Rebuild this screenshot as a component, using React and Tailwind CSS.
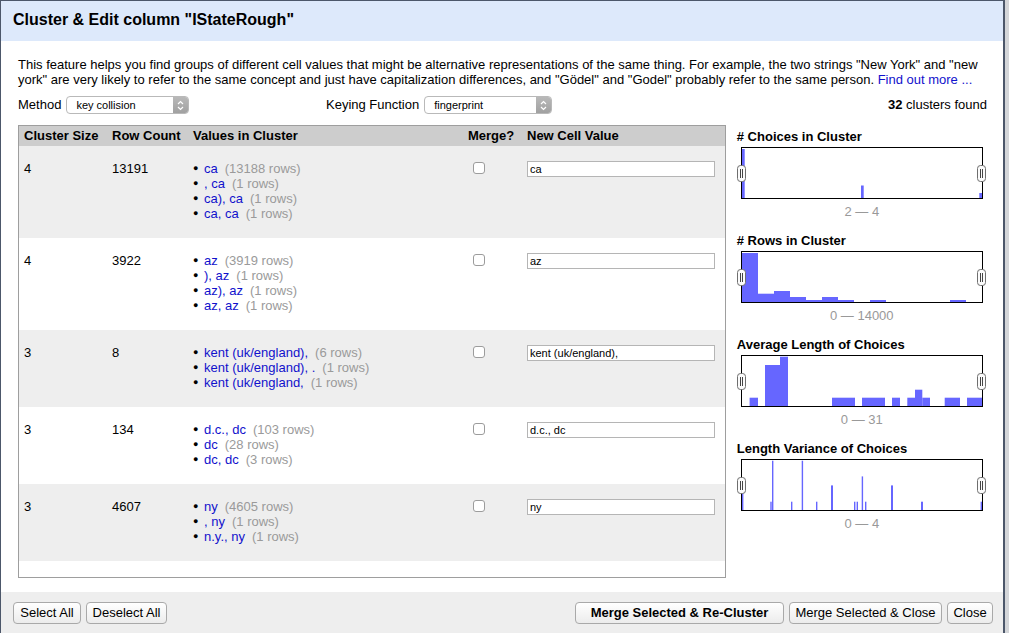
import React from "react";

const rows = [
  { size: 4, count: 13191, vals: [["ca", "13188"], [", ca", "1"], ["ca), ca", "1"], ["ca, ca", "1"]], nv: "ca", gray: true },
  { size: 4, count: 3922, vals: [["az", "3919"], ["), az", "1"], ["az), az", "1"], ["az, az", "1"]], nv: "az", gray: false },
  { size: 3, count: 8, vals: [["kent (uk/england),", "6"], ["kent (uk/england), .", "1"], ["kent (uk/england,", "1"]], nv: "kent (uk/england),", gray: true },
  { size: 3, count: 134, vals: [["d.c., dc", "103"], ["dc", "28"], ["dc, dc", "3"]], nv: "d.c., dc", gray: false },
  { size: 3, count: 4607, vals: [["ny", "4605"], [", ny", "1"], ["n.y., ny", "1"]], nv: "ny", gray: true },
];

const hists = [
  {
    title: "# Choices in Cluster",
    label: "2 \u2014 4",
    bars: [[0, 2.7, 1], [119, 2.7, 37.5], [237.3, 2.7, 45]],
  },
  {
    title: "# Rows in Cluster",
    label: "0 \u2014 14000",
    bars: [[0, 16, 1], [16, 16, 41.7], [32, 16, 39], [48, 16, 45], [64, 16, 48], [80, 16, 45], [96, 16, 48], [128, 16, 48], [208, 16, 48]],
  },
  {
    title: "Average Length of Choices",
    label: "0 \u2014 31",
    bars: [[7.6, 8.4, 41.7], [23, 15, 9], [38, 8, 0.7], [90, 23, 41.7], [120, 23, 41.7], [150, 8, 41.7], [165.3, 7.7, 41.7], [173, 7.3, 33.7], [180.3, 7.7, 41.7], [202.7, 15.3, 41.7], [225, 15, 41.7]],
  },
  {
    title: "Length Variance of Choices",
    label: "0 \u2014 4",
    bars: [[0, 1.4, 33.4], [28.3, 1.4, 41.7], [30, 1.4, 0.7], [49, 1.4, 41.7], [59.7, 1.4, 0.7], [74, 1.4, 41.7], [89, 2, 25.4], [112, 1.4, 41.7], [114.6, 1.4, 41.7], [119.7, 1.4, 16.4], [123, 1.4, 41.7], [149, 2, 25.4], [179, 2, 41.7], [238.6, 1.4, 41.7]],
  },
];

function Handle({ side }) {
  return (
    <svg
      width="9"
      height="17"
      viewBox="0 0 9 17"
      className={side === "l" ? "absolute left-[-5px] top-[17px]" : "absolute right-[-4px] top-[17px]"}
    >
      <rect x="0.5" y="0.5" width="8" height="16" rx="3" fill="#fbfbfb" stroke="#6e6e6e" />
      <line x1="3.5" y1="4" x2="3.5" y2="13" stroke="#444" strokeWidth="1" />
      <line x1="5.5" y1="4" x2="5.5" y2="13" stroke="#444" strokeWidth="1" />
    </svg>
  );
}

function Histogram({ h }) {
  return (
    <div className="mb-[14px]">
      <div className="text-[13px] leading-[15px] font-bold text-black">{h.title}</div>
      <div className="relative mt-[3px] ml-[4px] w-[242px] h-[52px] border border-black bg-white">
        <svg width="240" height="50" viewBox="0 0 240 50" className="block">
          {h.bars.map(([x, w, y], i) => (
            <rect key={i} x={x} y={y} width={w} height={50 - y} fill="#6666ff" />
          ))}
        </svg>
        <Handle side="l" />
        <Handle side="r" />
      </div>
      <div className="ml-[4px] w-[242px] mt-[5px] text-center text-[13px] leading-[15px] text-[#999]">{h.label}</div>
    </div>
  );
}

function Select({ value, w }) {
  return (
    <div className={`flex items-center h-[18px] rounded-[4px] border border-[#b9b9b9] bg-white overflow-hidden ${w}`}>
      <span className="flex-1 pl-[9px] text-[11px] leading-[16px] text-black">{value}</span>
      <span className="w-[15px] h-full bg-gradient-to-b from-[#b9b9b9] to-[#a1a1a1] flex items-center justify-center">
        <svg width="7" height="11" viewBox="0 0 7 11">
          <path d="M1 4 L3.5 1.5 L6 4" fill="none" stroke="#fff" strokeWidth="1.2" />
          <path d="M1 7 L3.5 9.5 L6 7" fill="none" stroke="#fff" strokeWidth="1.2" />
        </svg>
      </span>
    </div>
  );
}

function Btn({ children, w, bold }) {
  return (
    <button
      className={`h-[22px] ${w} rounded-[4px] border border-[#a9a9a9] bg-gradient-to-b from-white to-[#ececec] text-[13px] leading-[20px] text-black ${bold ? "font-bold" : ""}`}
    >
      {children}
    </button>
  );
}

export default function App() {
  return (
    <div className="flex w-[1009px] h-[633px] overflow-hidden bg-[#d4d6d9]" style={{ fontFamily: '"Liberation Sans", Arial, sans-serif' }}>
      <div className="flex flex-col w-[1005px] h-[633px] bg-white border-t border-l border-r-2 border-[#4c576a]">
        {/* Header */}
        <div className="h-[40px] bg-[#dde9fb] flex items-center px-[12px] pb-[3px]">
          <h1 className="text-[16px] font-bold text-black">Cluster &amp; Edit column "IStateRough"</h1>
        </div>

        {/* Body */}
        <div className="flex-1 flex flex-col pl-[17px] pr-[15px] pt-[16px]">
          <p className="text-[13px] leading-[15px] text-black">
            This feature helps you find groups of different cell values that might be alternative representations of the same thing. For example, the two strings "New York" and "new york" are very likely to refer to the same concept and just have capitalization differences, and "Gödel" and "Godel" probably refer to the same person. <span className="text-[#1111cc]">Find out more ...</span>
          </p>

          <div className="mt-[9px] h-[18px] flex items-center text-[13px] text-black">
            <div className="w-[308px] flex items-center gap-[5px]">
              <span>Method</span>
              <Select value="key collision" w="w-[123px]" />
            </div>
            <div className="flex items-center gap-[5px]">
              <span>Keying Function</span>
              <Select value="fingerprint" w="w-[128px]" />
            </div>
            <div className="flex-1 text-right pr-[1px]">
              <b>32</b> clusters found
            </div>
          </div>

          <div className="mt-[11px] flex">
            {/* Table */}
            <div className="w-[710px] h-[453px] border border-[#9e9e9e] overflow-hidden bg-white">
              <div className="grid grid-cols-[93px_81px_275px_59px_1fr] h-[20px] items-center bg-[#cdcdcd] text-[13px] font-bold text-black">
                <div className="pl-[5px]">Cluster Size</div>
                <div>Row Count</div>
                <div>Values in Cluster</div>
                <div>Merge?</div>
                <div>New Cell Value</div>
              </div>
              {rows.map((r, i) => (
                <div
                  key={i}
                  className={`grid grid-cols-[93px_81px_275px_59px_1fr] pt-[15px] pb-[17px] text-[13px] leading-[15px] text-black ${r.gray ? "bg-[#eeeeee]" : "bg-white"}`}
                >
                  <div className="pl-[5px]">{r.size}</div>
                  <div>{r.count}</div>
                  <div>
                    {r.vals.map(([v, c], j) => (
                      <div key={j} className="flex h-[15px]">
                        <span className="w-[11px] text-[9px] leading-[15px]">●</span>
                        <span className="text-[#1111cc]">{v}</span>
                        <span className="ml-[7px] text-[#9a9a9a]">({c} rows)</span>
                      </div>
                    ))}
                  </div>
                  <div className="pl-[5px] pt-[1px]">
                    <div className="w-[12px] h-[12px] rounded-[3px] border border-[#9c9c9c] bg-white" />
                  </div>
                  <div>
                    <div className="w-[188px] h-[16px] border border-[#b5b5b5] bg-white text-[11px] leading-[14px] pl-[2px] text-black whitespace-nowrap overflow-hidden">
                      {r.nv}
                    </div>
                  </div>
                </div>
              ))}
            </div>

            {/* Histograms */}
            <div className="ml-[11px] w-[252px] pt-[4px]">
              {hists.map((h, i) => (
                <Histogram key={i} h={h} />
              ))}
            </div>
          </div>
        </div>

        {/* Footer */}
        <div className="h-[41px] bg-[#eeeeee] flex items-start pt-[10px] pl-[12px] pr-[10px]">
          <div className="flex gap-[5px]">
            <Btn w="w-[68px]">Select All</Btn>
            <Btn w="w-[81px]">Deselect All</Btn>
          </div>
          <div className="flex-1" />
          <div className="flex gap-[5px]">
            <Btn w="w-[209px]" bold>Merge Selected &amp; Re-Cluster</Btn>
            <Btn w="w-[153px]">Merge Selected &amp; Close</Btn>
            <Btn w="w-[46px]">Close</Btn>
          </div>
        </div>
      </div>
    </div>
  );
}
